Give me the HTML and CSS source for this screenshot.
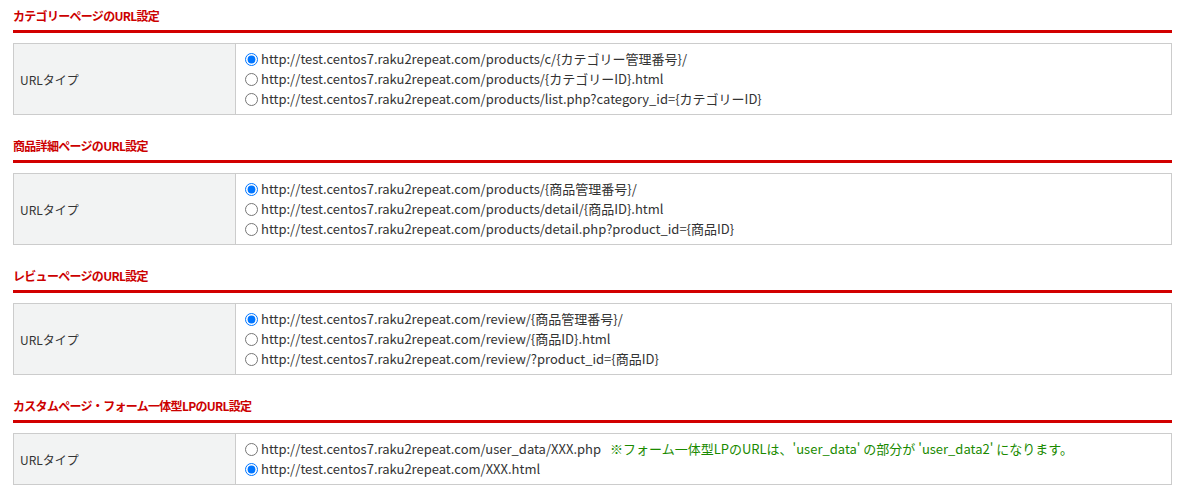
FILE: index.html
```html
<!DOCTYPE html>
<html lang="ja">
<head>
  <meta charset="UTF-8">
  <title>URL設定</title>
  <link rel="stylesheet" href="styles.css">
</head>
<body>
  <div class="settings">
    <h2 class="section-title">カテゴリーページのURL設定</h2>
    <table class="form-table">
      <tr>
        <th>URLタイプ</th>
        <td>
          <label><input type="radio" name="category_url" checked>http://test.centos7.raku2repeat.com/products/c/{カテゴリー管理番号}/</label>
          <label><input type="radio" name="category_url">http://test.centos7.raku2repeat.com/products/{カテゴリーID}.html</label>
          <label><input type="radio" name="category_url">http://test.centos7.raku2repeat.com/products/list.php?category_id={カテゴリーID}</label>
        </td>
      </tr>
    </table>

    <h2 class="section-title">商品詳細ページのURL設定</h2>
    <table class="form-table">
      <tr>
        <th>URLタイプ</th>
        <td>
          <label><input type="radio" name="product_url" checked>http://test.centos7.raku2repeat.com/products/{商品管理番号}/</label>
          <label><input type="radio" name="product_url">http://test.centos7.raku2repeat.com/products/detail/{商品ID}.html</label>
          <label><input type="radio" name="product_url">http://test.centos7.raku2repeat.com/products/detail.php?product_id={商品ID}</label>
        </td>
      </tr>
    </table>

    <h2 class="section-title">レビューページのURL設定</h2>
    <table class="form-table">
      <tr>
        <th>URLタイプ</th>
        <td>
          <label><input type="radio" name="review_url" checked>http://test.centos7.raku2repeat.com/review/{商品管理番号}/</label>
          <label><input type="radio" name="review_url">http://test.centos7.raku2repeat.com/review/{商品ID}.html</label>
          <label><input type="radio" name="review_url">http://test.centos7.raku2repeat.com/review/?product_id={商品ID}</label>
        </td>
      </tr>
    </table>

    <h2 class="section-title">カスタムページ・フォーム一体型LPのURL設定</h2>
    <table class="form-table">
      <tr>
        <th>URLタイプ</th>
        <td>
          <label><input type="radio" name="custom_url">http://test.centos7.raku2repeat.com/user_data/XXX.php<span class="note">※フォーム一体型LPのURLは、'user_data' の部分が 'user_data2' になります。</span></label>
          <label><input type="radio" name="custom_url" checked>http://test.centos7.raku2repeat.com/XXX.html</label>
        </td>
      </tr>
    </table>
  </div>
</body>
</html>
```

FILE: styles.css
```css
body {
  margin: 0;
  padding: 0 15px 0 13px;
  font-family: "Noto Sans CJK JP", "Noto Sans", sans-serif;
  font-size: 12px;
  color: #333;
  background: #fff;
}

.section-title {
  margin: 0 0 10px;
  padding: 6px 0 5px;
  font-size: 12px;
  font-weight: bold;
  line-height: 19px;
  letter-spacing: -0.7px;
  color: #cc0000;
  border-bottom: 3px solid #d20000;
}

.form-table {
  width: 100%;
  margin-bottom: 15px;
  border-collapse: collapse;
  border: 1px solid #ccc;
}

.form-table th {
  width: 209px;
  padding: 0 6px;
  text-align: left;
  font-weight: normal;
  background: #f2f3f3;
  border: 1px solid #ccc;
}

.form-table td {
  padding: 5px 8px;
  font-size: 13px;
  line-height: 20px;
  border: 1px solid #ccc;
}

.form-table label {
  display: block;
}

.form-table input[type="radio"] {
  margin: 0 3px 0 1px;
  vertical-align: -2px;
}

.note {
  margin-left: 9px;
  color: #1a8a00;
}
```
